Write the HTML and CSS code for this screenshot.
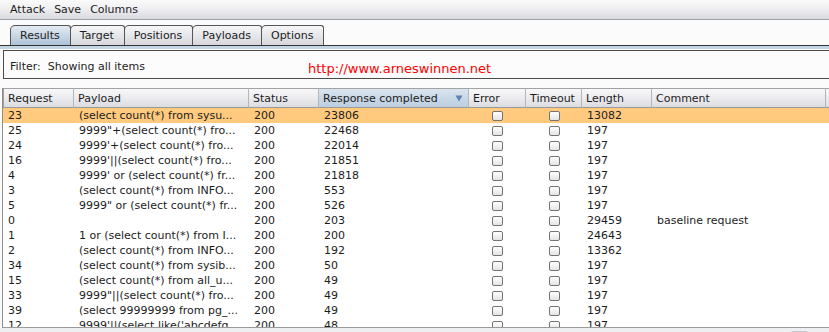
FILE: index.html
```html
<!DOCTYPE html>
<html>
<head>
    <title>Intruder attack results</title>
    <link rel="stylesheet" href="styles.css">
</head>
<body>
    <div class="menubar">
        <span class="menu">Attack</span>
        <span class="menu">Save</span>
        <span class="menu">Columns</span>
    </div>
    <div class="tabstrip">
        <div class="tab active">Results</div>
        <div class="tab">Target</div>
        <div class="tab">Positions</div>
        <div class="tab">Payloads</div>
        <div class="tab">Options</div>
    </div>
    <div class="panel">
        <div class="filter">
            <span class="filterText">Filter:&nbsp; Showing all items</span>
            <span class="url">http://www.arneswinnen.net</span>
        </div>
        <div class="results">
            <table class="grid">
                <colgroup>
                    <col style="width:71px">
                    <col style="width:175px">
                    <col style="width:70px">
                    <col style="width:150px">
                    <col style="width:57px">
                    <col style="width:56px">
                    <col style="width:70px">
                    <col style="width:174px">
                    <col>
                </colgroup>
                <thead>
                    <tr>
                        <th>Request</th>
                        <th>Payload</th>
                        <th>Status</th>
                        <th class="sorted">
                            <div class="sortHead">
                                <span>Response completed</span>
                                <svg width="8" height="7" viewBox="0 0 8 7"><polygon points="0.5,0.5 7.5,0.5 4,6.5" fill="#5f84ad"/></svg>
                            </div>
                        </th>
                        <th>Error</th>
                        <th>Timeout</th>
                        <th>Length</th>
                        <th>Comment</th>
                        <th class="filler"></th>
                    </tr>
                </thead>
                <tbody id="rows"></tbody>
            </table>
        </div>
        <div class="hscroll">
            <div class="thumb"></div>
        </div>
    </div>
    <script>
        const rows = [
            ['23', '(select count(*) from sysu...', '200', '23806', '13082', ''],
            ['25', '9999"+(select count(*) fro...', '200', '22468', '197', ''],
            ['24', "9999'+(select count(*) fro...", '200', '22014', '197', ''],
            ['16', "9999'||(select count(*) fro...", '200', '21851', '197', ''],
            ['4', "9999' or (select count(*) fr...", '200', '21818', '197', ''],
            ['3', '(select count(*) from INFO...', '200', '553', '197', ''],
            ['5', '9999" or (select count(*) fr...', '200', '526', '197', ''],
            ['0', '', '200', '203', '29459', 'baseline request'],
            ['1', '1 or (select count(*) from I...', '200', '200', '24643', ''],
            ['2', '(select count(*) from INFO...', '200', '192', '13362', ''],
            ['34', '(select count(*) from sysib...', '200', '50', '197', ''],
            ['15', '(select count(*) from all_u...', '200', '49', '197', ''],
            ['33', '9999"||(select count(*) fro...', '200', '49', '197', ''],
            ['39', '(select 99999999 from pg_...', '200', '49', '197', ''],
            ['12', "9999'||(select like('abcdefg...", '200', '48', '197', '']
        ];

        const tbody = document.getElementById('rows');
        rows.forEach((r, i) => {
            const tr = document.createElement('tr');
            if (i === 0) tr.classList.add('selected');
            const cells = [r[0], r[1], r[2], r[3], null, null, r[4], r[5], ''];
            cells.forEach(value => {
                const td = document.createElement('td');
                if (value === null) {
                    td.classList.add('check');
                    td.innerHTML = '<span class="box"></span>';
                } else {
                    td.textContent = value;
                }
                tr.appendChild(td);
            });
            tbody.appendChild(tr);
        });
    </script>
</body>
</html>
```
FILE: styles.css
```css
html, body {
    margin: 0;
    height: 332px;
    overflow: hidden;
}
body {
    font-family: "DejaVu Sans", Verdana, sans-serif;
    font-size: 11px;
    color: #1c1c1c;
    background-color: #fbfbfb;
}
.menubar {
    display: flex;
    gap: 1px;
    height: 19px;
    line-height: 19px;
    padding-left: 6px;
    background: linear-gradient(#fafafa, #f1f1f3 40%, #d9dadf);
    border-bottom: 1px solid #9ca1a9;
}
.menu {
    padding: 0 4px;
}
.tabstrip {
    display: flex;
    padding: 5px 0 0 10px;
    border-bottom: 1px solid #333;
}
.tab {
    height: 19px;
    line-height: 19px;
    padding: 0 10px 0 9px;
    border: 1px solid #555;
    border-bottom: none;
    border-radius: 5px 3px 0 0;
    margin-right: -1px;
    background: linear-gradient(#f6f6f8, #e6e7ea 50%, #d6d7dc);
}
.tab.active {
    background: linear-gradient(#e3eaf2, #c9d7e5 50%, #adc3d8);
}
.panel {
    border-top: 3px solid #c4d5e6;
    padding-top: 1px;
}
.filter {
    display: flex;
    align-items: flex-start;
    box-sizing: border-box;
    height: 29px;
    margin-left: 3px;
    margin-right: -10px;
    padding: 9px 6px 0;
    border: 1px solid #4a4a4a;
    background-color: #fcfcfc;
}
.filterText {
    width: 298px;
    line-height: 13px;
}
.url {
    color: #ff0000;
    font-size: 13px;
    line-height: 15px;
    margin-top: 1px;
}
.results {
    margin: 9px 0 0 2px;
    height: 239px;
    overflow: hidden;
    border-left: 1px solid #8c8c8c;
    border-bottom: 1px solid #9a9a9a;
    background-color: #ffffff;
}
.grid {
    table-layout: fixed;
    width: 827px;
    border-collapse: separate;
    border-spacing: 0;
}
.grid th {
    height: 18px;
    padding: 0 0 0 4px;
    text-align: left;
    font-weight: normal;
    white-space: nowrap;
    overflow: hidden;
    border-top: 1px solid #a2a2a2;
    border-bottom: 1px solid #9a9a9a;
    border-right: 1px solid #b4b6ba;
    background: linear-gradient(#f7f7f9, #ececef 50%, #dbdce1);
}
.grid th:first-child {
    border-left: 1px solid #a0a0a0;
}
.grid th.sorted {
    background: linear-gradient(#dbe5ef, #c9d8e7 50%, #bccfe2);
}
.grid th.filler {
    border-right: none;
}
.sortHead {
    display: flex;
    align-items: center;
    justify-content: space-between;
    padding-right: 5px;
}
.sortHead svg {
    margin-top: 1px;
}
.grid td {
    height: 15px;
    padding: 0 0 0 5px;
    line-height: 15px;
    white-space: nowrap;
    overflow: hidden;
}
.grid td.check {
    padding: 0;
    text-align: center;
}
.grid tr.selected td {
    background-color: #ffca7e;
}
.box {
    display: inline-block;
    box-sizing: border-box;
    width: 11px;
    height: 10px;
    margin-top: 3px;
    vertical-align: top;
    border: 1px solid #747474;
    border-radius: 2px;
    background: linear-gradient(#ffffff, #e4e4e6);
}
.hscroll {
    display: flex;
    height: 12px;
    background-color: #eeeff1;
}
.thumb {
    margin: 3px 0 0 791px;
    width: 17px;
    height: 9px;
    border-radius: 2px;
    background-color: #c4c7cc;
}
```
